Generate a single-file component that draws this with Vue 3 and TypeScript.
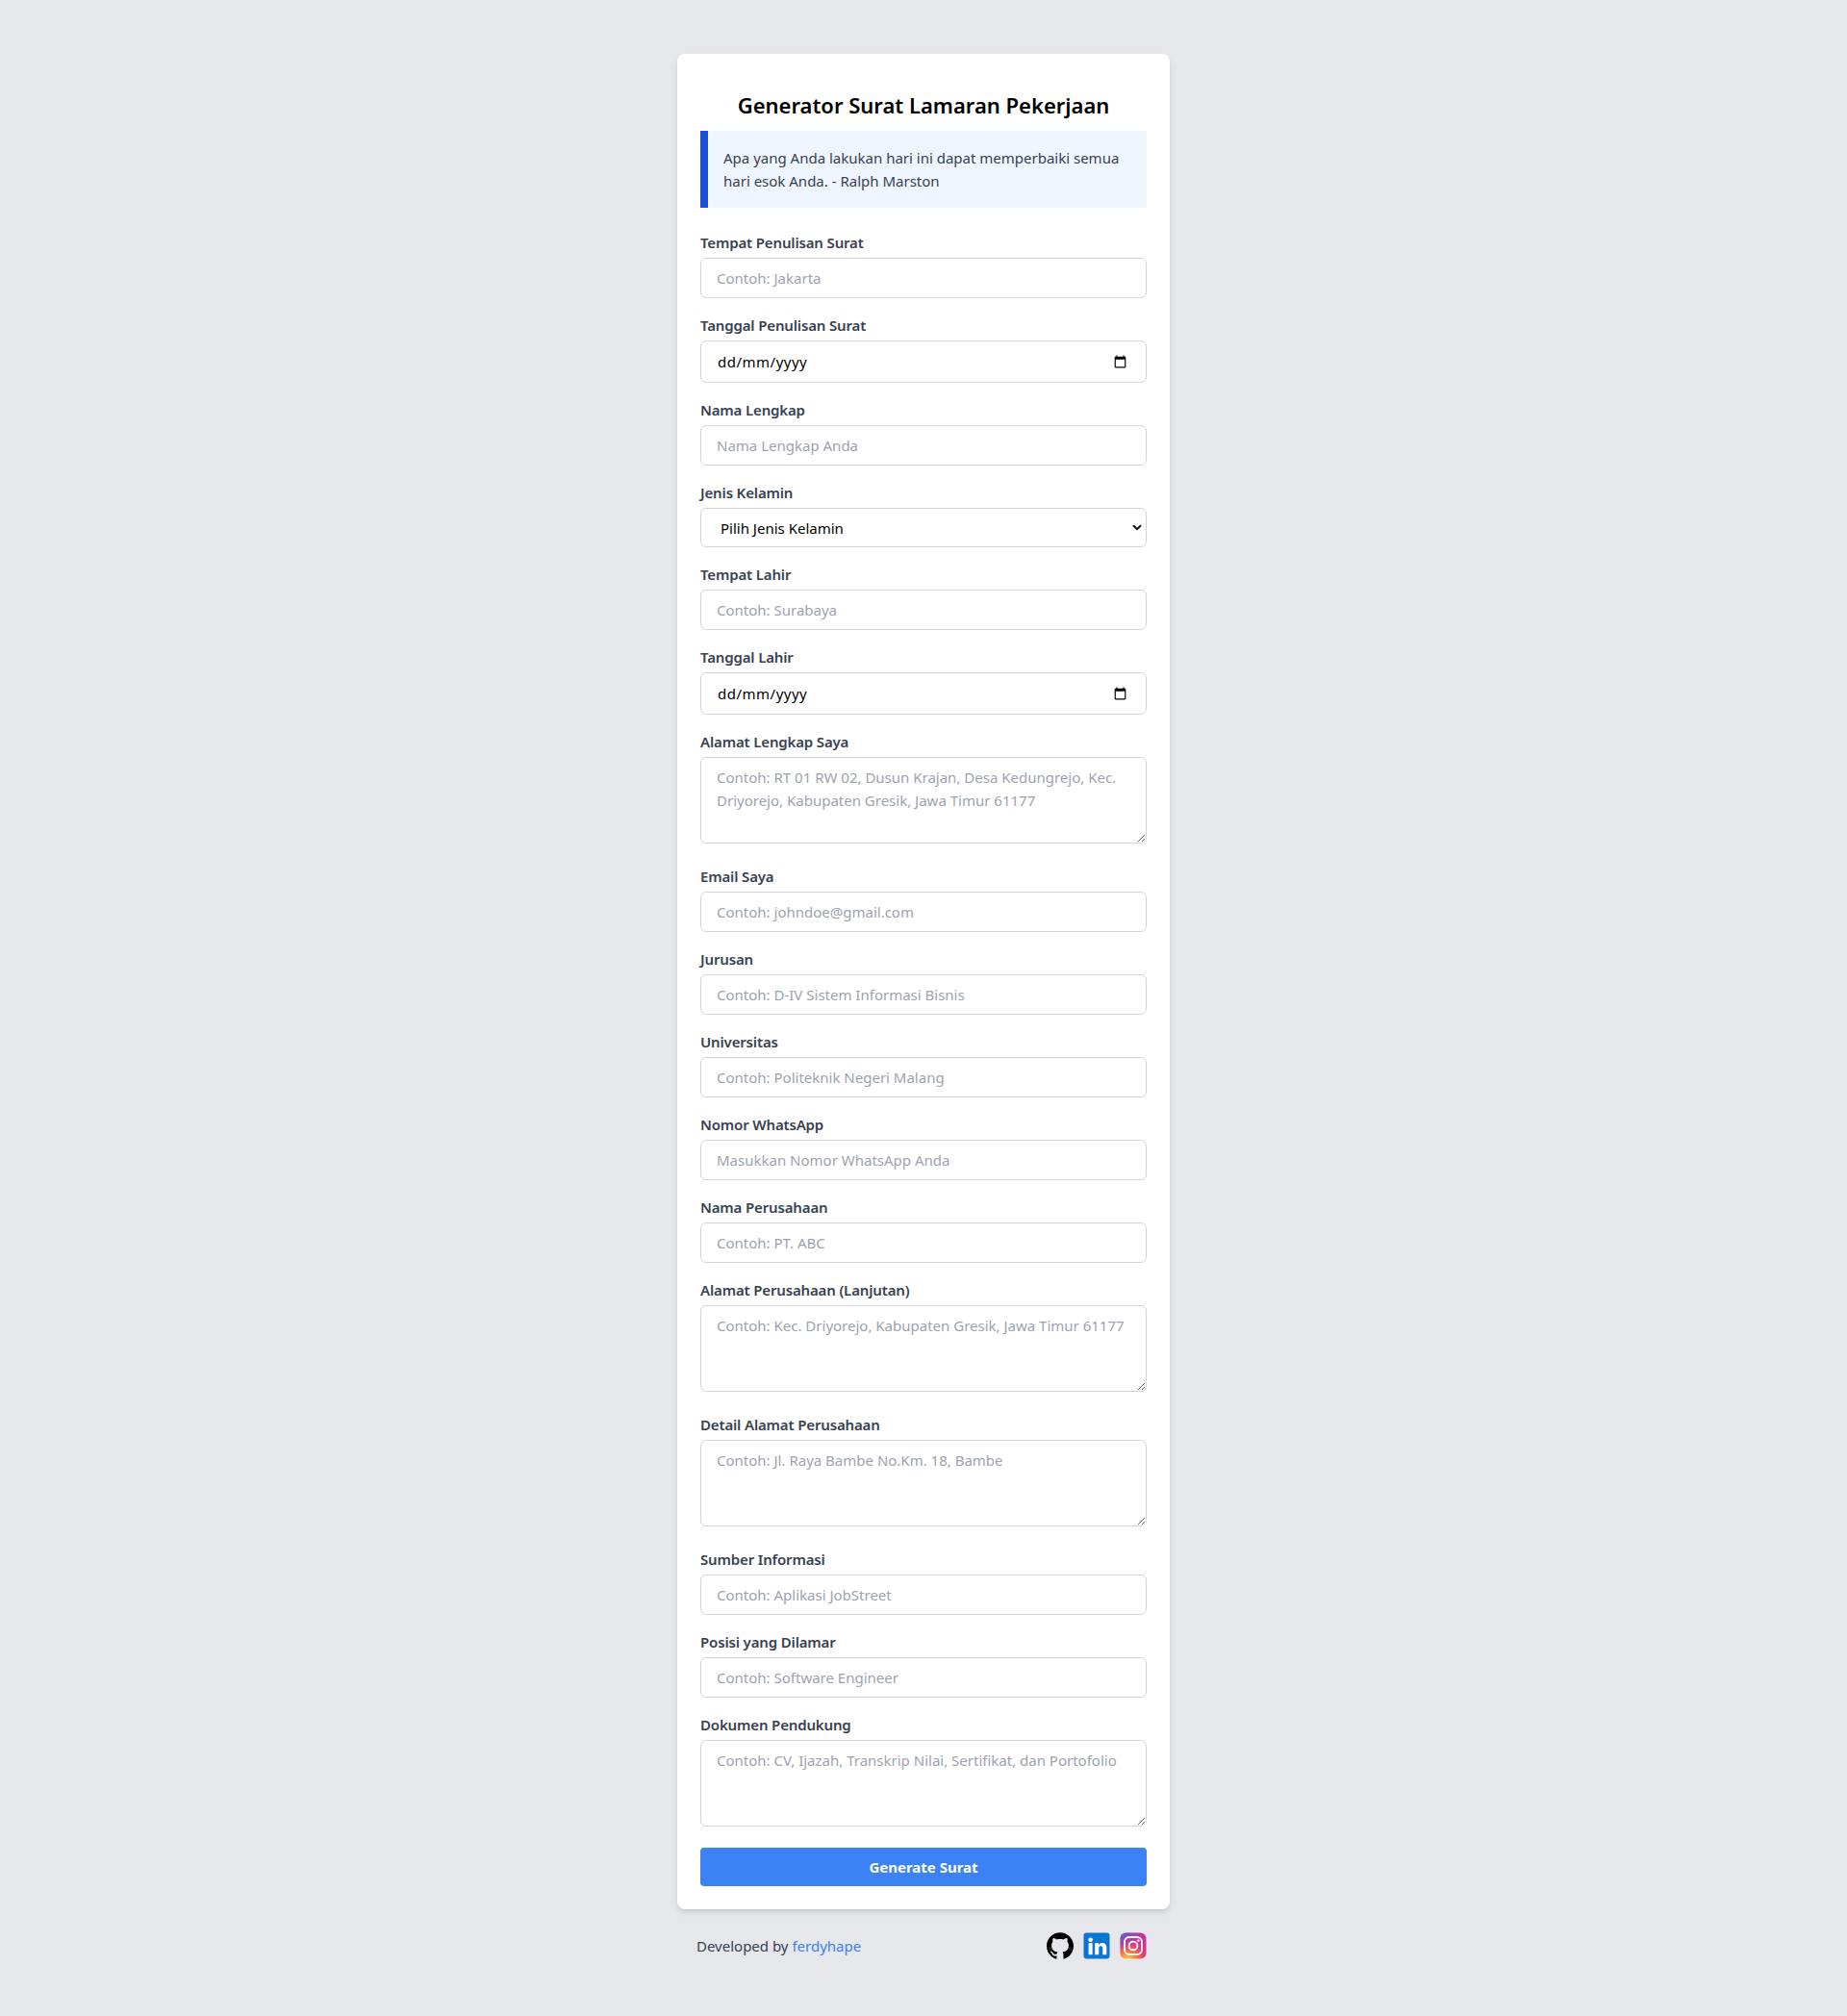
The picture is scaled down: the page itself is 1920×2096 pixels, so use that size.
<script setup lang="ts">
type Field = {
  label: string
  kind: 'text' | 'date' | 'select' | 'area'
  placeholder?: string
}

const fields: Field[] = [
  { label: 'Tempat Penulisan Surat', kind: 'text', placeholder: 'Contoh: Jakarta' },
  { label: 'Tanggal Penulisan Surat', kind: 'date' },
  { label: 'Nama Lengkap', kind: 'text', placeholder: 'Nama Lengkap Anda' },
  { label: 'Jenis Kelamin', kind: 'select' },
  { label: 'Tempat Lahir', kind: 'text', placeholder: 'Contoh: Surabaya' },
  { label: 'Tanggal Lahir', kind: 'date' },
  {
    label: 'Alamat Lengkap Saya',
    kind: 'area',
    placeholder: 'Contoh: RT 01 RW 02, Dusun Krajan, Desa Kedungrejo, Kec. Driyorejo, Kabupaten Gresik, Jawa Timur 61177',
  },
  { label: 'Email Saya', kind: 'text', placeholder: 'Contoh: johndoe@gmail.com' },
  { label: 'Jurusan', kind: 'text', placeholder: 'Contoh: D-IV Sistem Informasi Bisnis' },
  { label: 'Universitas', kind: 'text', placeholder: 'Contoh: Politeknik Negeri Malang' },
  { label: 'Nomor WhatsApp', kind: 'text', placeholder: 'Masukkan Nomor WhatsApp Anda' },
  { label: 'Nama Perusahaan', kind: 'text', placeholder: 'Contoh: PT. ABC' },
  { label: 'Alamat Perusahaan (Lanjutan)', kind: 'area', placeholder: 'Contoh: Kec. Driyorejo, Kabupaten Gresik, Jawa Timur 61177' },
  { label: 'Detail Alamat Perusahaan', kind: 'area', placeholder: 'Contoh: Jl. Raya Bambe No.Km. 18, Bambe' },
  { label: 'Sumber Informasi', kind: 'text', placeholder: 'Contoh: Aplikasi JobStreet' },
  { label: 'Posisi yang Dilamar', kind: 'text', placeholder: 'Contoh: Software Engineer' },
  { label: 'Dokumen Pendukung', kind: 'area', placeholder: 'Contoh: CV, Ijazah, Transkrip Nilai, Sertifikat, dan Portofolio' },
]
</script>

<template>
  <main class="page">
    <section class="card">
      <h1 class="title">Generator Surat Lamaran Pekerjaan</h1>
      <p class="quote">Apa yang Anda lakukan hari ini dapat memperbaiki semua hari esok Anda. - Ralph Marston</p>

      <form class="form" @submit.prevent>
        <div v-for="field in fields" :key="field.label" class="field">
          <label class="label">{{ field.label }}</label>
          <input v-if="field.kind === 'text'" class="control" type="text" :placeholder="field.placeholder" />
          <div v-else-if="field.kind === 'date'" class="date-wrap">
            <input class="control control--date" type="date" />
            <span class="date-mask">dd/mm/yyyy</span>
          </div>
          <div v-else-if="field.kind === 'select'" class="select-wrap">
            <select class="control control--select">
              <option>Pilih Jenis Kelamin</option>
              <option>Laki-laki</option>
              <option>Perempuan</option>
            </select>
            <svg class="select-arrow" viewBox="0 0 10 7" width="10" height="7" aria-hidden="true">
              <path d="M1 1.2l4 4 4-4" fill="none" stroke="#111" stroke-width="2" />
            </svg>
          </div>
          <textarea v-else class="control control--area" rows="3" :placeholder="field.placeholder"></textarea>
        </div>
        <button class="submit" type="submit">Generate Surat</button>
      </form>
    </section>

    <footer class="footer">
      <p class="credit">Developed by <a class="credit-link" href="#">ferdyhape</a></p>
      <div class="socials">
        <a href="#" class="social" aria-label="GitHub">
          <svg viewBox="0 0 24 24" width="28" height="28">
            <path
              d="M12 .297c-6.63 0-12 5.373-12 12 0 5.303 3.438 9.8 8.205 11.385.6.113.82-.258.82-.577 0-.285-.01-1.04-.015-2.04-3.338.724-4.042-1.61-4.042-1.61C4.422 18.07 3.633 17.7 3.633 17.7c-1.087-.744.084-.729.084-.729 1.205.084 1.838 1.236 1.838 1.236 1.07 1.835 2.809 1.305 3.495.998.108-.776.417-1.305.76-1.605-2.665-.3-5.466-1.332-5.466-5.93 0-1.31.465-2.38 1.235-3.22-.135-.303-.54-1.523.105-3.176 0 0 1.005-.322 3.3 1.23.96-.267 1.98-.399 3-.405 1.02.006 2.04.138 3 .405 2.28-1.552 3.285-1.23 3.285-1.23.645 1.653.24 2.873.12 3.176.765.84 1.23 1.91 1.23 3.22 0 4.61-2.805 5.625-5.475 5.92.42.36.81 1.096.81 2.22 0 1.606-.015 2.896-.015 3.286 0 .315.21.69.825.57C20.565 22.092 24 17.592 24 12.297c0-6.627-5.373-12-12-12"
              fill="#000"
            />
            <path d="M1.5 13.6l3 .5M1.7 15.6l3-.3M22.5 13.6l-3 .5M22.3 15.6l-3-.3" stroke="#8a8a8a" stroke-width=".35" fill="none" />
          </svg>
        </a>
        <a href="#" class="social" aria-label="LinkedIn">
          <svg viewBox="0 0 28 28" width="28" height="28">
            <rect x="0.5" y="0.5" width="27" height="27" rx="3" fill="#0a76cf" />
            <circle cx="7.6" cy="7.7" r="2.3" fill="#fff" />
            <rect x="5.6" y="11.2" width="4" height="12" fill="#fff" />
            <path
              d="M12.2 11.2h3.8v1.7c.7-1.2 2.1-2 3.8-2 3.3 0 4.5 2.1 4.5 5.2v7.1h-4v-6.3c0-1.6-.4-2.7-1.9-2.7-1.6 0-2.2 1.2-2.2 2.7v6.3h-4z"
              fill="#fff"
            />
          </svg>
        </a>
        <a href="#" class="social" aria-label="Instagram">
          <svg viewBox="0 0 28 28" width="28" height="28">
            <defs>
              <radialGradient id="ig-warm" cx="0.3" cy="1.05" r="1.1">
                <stop offset="0" stop-color="#fdd74f" />
                <stop offset="0.3" stop-color="#fb7a3c" />
                <stop offset="0.6" stop-color="#e8337f" />
                <stop offset="1" stop-color="#c032a8" />
              </radialGradient>
              <radialGradient id="ig-cool" cx="0" cy="0" r="0.75">
                <stop offset="0" stop-color="#5b63c9" />
                <stop offset="1" stop-color="#5b63c9" stop-opacity="0" />
              </radialGradient>
            </defs>
            <rect x="0.5" y="0.5" width="27" height="27" rx="6" fill="url(#ig-warm)" />
            <rect x="0.5" y="0.5" width="27" height="27" rx="6" fill="url(#ig-cool)" />
            <rect x="5" y="5" width="18" height="18" rx="5" fill="none" stroke="#fff" stroke-width="1.8" />
            <circle cx="14" cy="14" r="4.4" fill="none" stroke="#fff" stroke-width="1.8" />
            <circle cx="19.4" cy="8.6" r="1.2" fill="#fff" />
          </svg>
        </a>
      </div>
    </footer>
  </main>
</template>

<style scoped>
.page {
  min-height: 2096px;
  box-sizing: border-box;
  padding-top: 56px;
  background: #e5e7eb;
  font-family: "Noto Sans", "Open Sans", sans-serif;
  font-size: 15px;
  line-height: 24px;
  color: #374151;
}

.card {
  box-sizing: border-box;
  width: 512px;
  margin: 0 auto;
  padding: 37px 24px 24px;
  background: #fff;
  border-radius: 8px;
  box-shadow: 0 4px 6px -1px rgba(0, 0, 0, 0.1), 0 2px 4px -2px rgba(0, 0, 0, 0.1);
}

.title {
  margin: 0 0 11px;
  font-size: 22px;
  line-height: 32px;
  font-weight: 600;
  text-align: center;
  color: #000;
}

.quote {
  margin: 0 0 24px;
  padding: 16px;
  border-left: 8px solid #1d4ed8;
  background: #eff6ff;
}

.field {
  margin-bottom: 16px;
}

.label {
  display: block;
  margin-bottom: 4px;
  font-weight: 600;
  letter-spacing: -0.15px;
}

.control {
  display: block;
  box-sizing: border-box;
  width: 100%;
  height: 42px;
  margin: 0;
  padding: 8px 16px;
  border: 1px solid #d1d5db;
  border-radius: 6px;
  background: #fff;
  font: inherit;
  color: #000;
  outline: 0;
}

.control::placeholder {
  color: #9ca3af;
}

.select-wrap {
  position: relative;
}

.control--select {
  height: 41px;
  padding-left: 20px;
  appearance: none;
}

.select-arrow {
  position: absolute;
  right: 5px;
  top: 17px;
}

.date-wrap {
  position: relative;
}

.control--date {
  height: 44px;
  padding-right: 17px;
}

.control--date::-webkit-datetime-edit {
  visibility: hidden;
}

.date-mask {
  position: absolute;
  left: 18px;
  top: 10px;
  color: #000;
  letter-spacing: 0.5px;
}

.control--area {
  height: 90px;
  margin-bottom: 22px;
}

.submit {
  display: block;
  width: 100%;
  height: 40px;
  margin-top: 22px;
  border: 0;
  border-radius: 4px;
  background: #3b82f6;
  font: inherit;
  font-weight: 700;
  color: #fff;
}

.footer {
  box-sizing: border-box;
  width: 512px;
  margin: 24px auto 0;
  padding: 0 24px 0 20px;
  display: flex;
  align-items: center;
  justify-content: space-between;
}

.credit {
  margin: 0;
}

.credit-link {
  color: #3b82f6;
  text-decoration: none;
}

.socials {
  display: flex;
  gap: 10px;
}

.social {
  display: block;
  height: 28px;
}
</style>

<style>
body {
  margin: 0;
}
</style>
